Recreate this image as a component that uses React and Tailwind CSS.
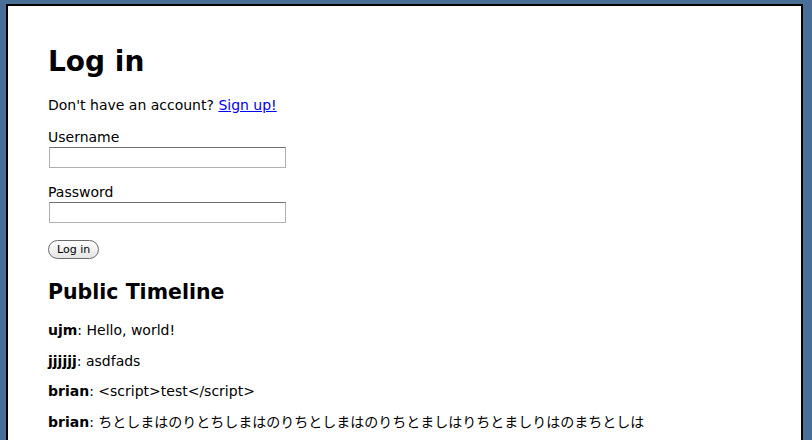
export default function App() {
  const posts = [
    { user: 'ujm', text: 'Hello, world!' },
    { user: 'jjjjjj', text: 'asdfads' },
    { user: 'brian', text: '<script>test</script>' },
    { user: 'brian', text: 'ちとしまはのりとちしまはのりちとしまはのりちとましはりちとましりはのまちとしは' },
  ];

  return (
    <div className="h-[440px] overflow-hidden bg-[#4a6f97] pl-[6px] pr-[9px] pt-[4px]">
      <div
        className="h-[480px] border-l-2 border-t-2 border-r-2 border-black bg-white pl-[40px] pt-[38px] text-[14px] text-black"
        style={{ fontFamily: '"DejaVu Sans", Verdana, "Noto Sans CJK JP", sans-serif' }}
      >
        <h1 className="text-[28px] font-bold leading-[36px]">Log in</h1>
        <p className="mt-[16px] leading-[18px]">
          Don't have an account? <a href="#" className="text-[#0000ee] underline">Sign up!</a>
        </p>
        <form className="mt-[14px]">
          <label className="block leading-[18px]">Username</label>
          <input type="text" className="ml-[1px] mt-[1px] block h-[21px] w-[237px] border border-[#b0b0b0] border-t-[#707070] bg-white" />
          <label className="mt-[15px] block leading-[18px]">Password</label>
          <input type="password" className="ml-[1px] mt-[1px] block h-[21px] w-[237px] border border-[#b0b0b0] border-t-[#707070] bg-white" />
          <button
            type="button"
            className="mt-[17px] block h-[19px] rounded-full border border-[#6a6a6a] bg-gradient-to-b from-white to-[#e4e4e4] px-[8px] text-[11px] leading-[17px]"
          >
            Log in
          </button>
        </form>
        <h2 className="mt-[19px] text-[20.5px] font-bold leading-[28px]">Public Timeline</h2>
        <div className="mt-[15px]">
          {posts.map((p, i) => (
            <p key={i} className="mb-[12.5px] leading-[18px]">
              <b>{p.user}</b>: {p.text}
            </p>
          ))}
        </div>
      </div>
    </div>
  );
}
